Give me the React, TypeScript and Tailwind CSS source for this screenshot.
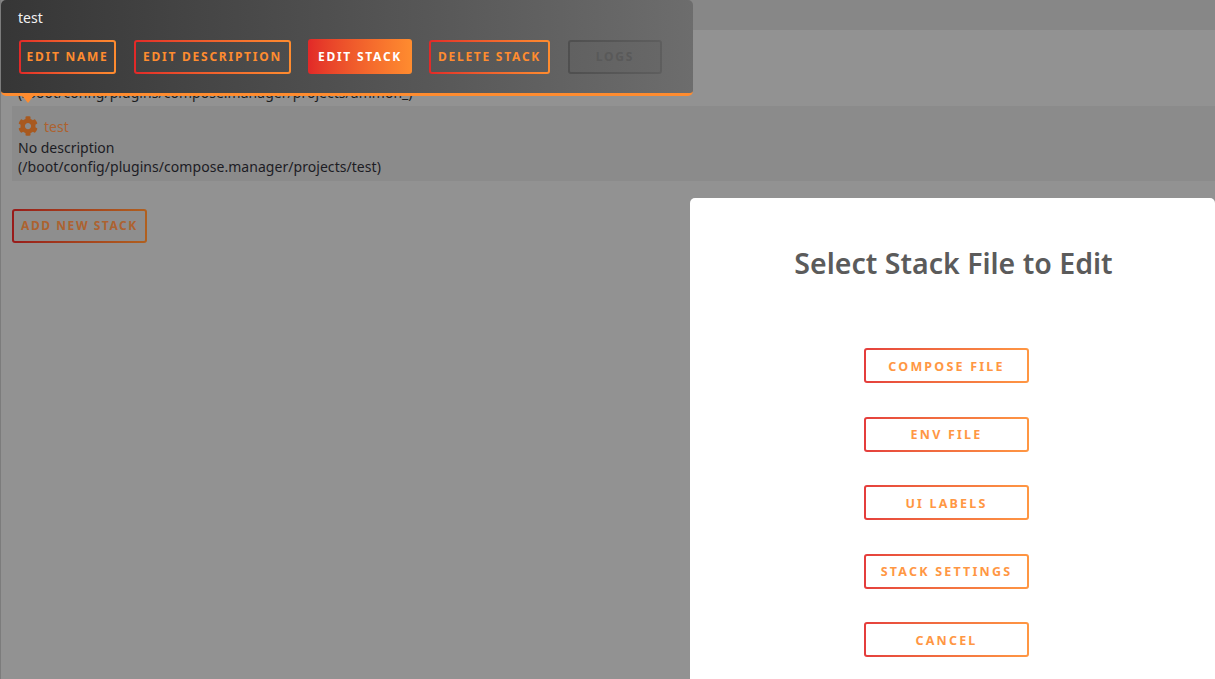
import React from 'react';
import { FaCog } from "react-icons/fa";

const font = "font-['Noto_Sans','Open_Sans',sans-serif]";

// gradient border button, text stays orange
function GradBtn({ label, className = "", inner = "bg-[#474747]", text = "text-[12px] tracking-[1.75px]" }: { label: string; className?: string; inner?: string; text?: string }) {
    return (
        <div className={`rounded-[3px] bg-gradient-to-r from-[#e22828] to-[#ff8c2f] p-[2px] ${className}`}>
            <div className={`flex h-full w-full items-center justify-center rounded-[1px] ${inner}`}>
                <span className={`font-bold uppercase text-[#ff8c2f] ${text}`}>{label}</span>
            </div>
        </div>
    );
}

export default function App() {
    return (
        <div className={`relative h-[679px] w-[1215px] overflow-hidden border-l border-[#7c7c7c] bg-[#929292] ${font}`}>
            <div className="h-[30px] bg-[#878787]" />
            {/* first stack, mostly covered by the tooltip */}
            <div className="flex h-[76px] items-end pb-[4px] pl-[17px] text-[14px] leading-[19px] tracking-[0.03px] text-[#1c1c1c]">
                (/boot/config/plugins/compose.manager/projects/ammon_)
            </div>
            <div className="ml-[11px] h-[75px] bg-[#8b8b8b] px-[6px] pt-[9px] text-[14px] leading-[19px] text-[#1c1c24]">
                <div className="flex h-[22px] items-center gap-[6px]">
                    <FaCog className="h-[20px] w-[20px] text-[#a8591f]" />
                    <span className="text-[#ad6230]">test</span>
                </div>
                <div className="mt-[1px]">No description</div>
                <div className="tracking-[0.05px]">(/boot/config/plugins/compose.manager/projects/test)</div>
            </div>

            <div className="ml-[11px] mt-[28px] h-[34px] w-[135px] rounded-[3px] bg-gradient-to-r from-[#981a1a] to-[#b0601f] p-[2px]">
                <div className="flex h-full w-full items-center justify-center rounded-[1px] bg-[#8e8e8e]">
                    <span className="text-[12px] font-bold uppercase tracking-[1.55px] text-[#ad6230]">Add New Stack</span>
                </div>
            </div>

            {/* tooltip */}
            <div className="absolute left-[19px] top-[93px] h-0 w-0 border-x-[8px] border-t-[10px] border-x-transparent border-t-[#ff8c2f]" />
            <div className="absolute left-0 top-0 h-[96px] w-[692px] rounded-[5px] border-b-[3px] border-[#ff8c2f] bg-gradient-to-r from-[#363636] to-[#6d6d6d]">
                <div className="pl-[17px] pt-[8px] text-[14px] leading-[19px] text-[#f2f2f2]">test</div>
                <div className="ml-[18px] mt-[12px] flex items-center">
                    <GradBtn label="Edit Name" className="h-[34px] w-[97px]" inner="bg-gradient-to-r from-[#3b3b3b] to-[#414141]" />
                    <GradBtn label="Edit Description" className="ml-[18px] h-[34px] w-[157px]" inner="bg-gradient-to-r from-[#424242] to-[#4d4d4d]" />
                    <div className="ml-[17px] flex h-[35px] w-[104px] items-center justify-center rounded-[3px] bg-gradient-to-r from-[#e22828] to-[#ff8c2f]">
                        <span className="text-[12px] font-bold uppercase tracking-[1.75px] text-white">Edit Stack</span>
                    </div>
                    <GradBtn label="Delete Stack" className="ml-[17px] h-[34px] w-[121px]" inner="bg-gradient-to-r from-[#555555] to-[#5c5c5c]" />
                    <div className="ml-[18px] h-[34px] w-[94px] rounded-[3px] bg-gradient-to-r from-[#4f4f4f] to-[#5e5e5e] p-[2px]">
                        <div className="flex h-full w-full items-center justify-center rounded-[1px] bg-gradient-to-r from-[#616161] to-[#676767]">
                            <span className="text-[12px] font-bold uppercase tracking-[1.75px] text-[#595959]">Logs</span>
                        </div>
                    </div>
                </div>
            </div>

            {/* modal */}
            <div className="absolute left-[689px] top-[198px] h-[520px] w-[525px] rounded-[5px] bg-white">
                <h2 className="mt-[46px] pl-[2px] text-center text-[28.5px] font-semibold leading-[38px] text-[#5b5b5b]">Select Stack File to Edit</h2>
                <div className="ml-[174px] mt-[66px] flex w-[165px] flex-col gap-[33.5px]">
                    {["Compose File", "Env File", "UI Labels", "Stack Settings", "Cancel"].map(label => (
                        <GradBtn key={label} label={label} className="h-[35px] w-[165px] opacity-90" inner="bg-white pt-[3px]" text="text-[12.5px] tracking-[2.2px]" />
                    ))}
                </div>
            </div>
        </div>
    );
}
